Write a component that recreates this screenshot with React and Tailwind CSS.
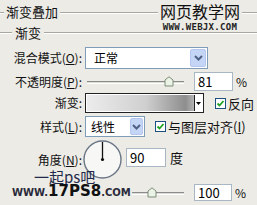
import React from 'react';

const Groove = ({ className = '' }) => (
  <div className={`h-0 border-t border-[#a7a6a0] border-b border-b-white ${className}`} />
);

const Chevron = () => (
  <svg width="9" height="6" viewBox="0 0 9 6">
    <path d="M1 1L4.5 4.5L8 1" stroke="#4d6185" strokeWidth="2" fill="none" />
  </svg>
);

const Check = () => (
  <div className="w-[11px] h-[11px] border border-[#1c5180] bg-white flex items-center justify-center">
    <svg width="9" height="9" viewBox="0 0 9 9">
      <path d="M1.5 4.5L3.5 6.5L7.5 2" stroke="#21a121" strokeWidth="1.8" fill="none" />
    </svg>
  </div>
);

const Slider = ({ thumb }) => (
  <div className="relative w-[97px] h-[16px]">
    <div className="absolute left-0 right-0 top-[7px] h-[3px] border-t border-[#8c8c8c] border-b border-b-white bg-[#dcdcd6]" />
    <svg className="absolute top-[2px]" style={{ left: thumb }} width="10" height="11" viewBox="0 0 10 11">
      <path d="M1 4L5 0.8L9 4V10H1Z" fill="#eaf3e6" stroke="#7c8c78" />
    </svg>
  </div>
);

const Field = ({ value, w, h }) => (
  <div className={`${w} ${h} bg-white border border-[#a9b6c4] flex items-center pl-[3px] text-[13px] text-black`}>
    {value}
  </div>
);

const Label = ({ children }) => (
  <div className="w-[83px] flex justify-end text-[12px] text-[#111] pr-[1px]">{children}</div>
);

export default function App() {
  return (
    <div className="relative w-[257px] h-[205px] overflow-hidden bg-[#ecebe6] font-['Noto_Sans_CJK_SC',sans-serif] leading-none">
      {/* 标题 */}
      <div className="flex items-center h-[20px] pt-[2px]">
        <Groove className="w-[4px] mt-[4px]" />
        <span className="px-[2px] text-[13px] text-[#111]">渐变叠加</span>
        <Groove className="flex-1 mt-[4px]" />
      </div>
      <div className="flex items-center h-[22px] mt-[1px]">
        <Groove className="w-[12px] mt-[2px]" />
        <span className="px-[3px] text-[13px] text-[#111]">渐变</span>
        <Groove className="flex-1 mt-[2px]" />
      </div>

      {/* 混合模式 */}
      <div className="flex items-center gap-[2px] mt-[4px] h-[22px]">
        <Label>混合模式(<u>O</u>):</Label>
        <div className="w-[123px] h-[22px] bg-white border border-[#7f9db9] flex items-center justify-between pl-[8px] pr-[1px] text-[12px] text-black">
          正常
          <div className="w-[16px] h-[18px] rounded-[2px] bg-[#c5d5f6] border border-[#b4c7ee] flex items-center justify-center">
            <Chevron />
          </div>
        </div>
      </div>

      {/* 不透明度 */}
      <div className="flex items-center mt-[3px] h-[19px]">
        <Label>不透明度(<u>P</u>):</Label>
        <div className="ml-[4px]">
          <Slider thumb={77} />
        </div>
        <div className="ml-[10px]">
          <Field value="81" w="w-[39px]" h="h-[19px]" />
        </div>
        <span className="ml-[3px] text-[12px] text-[#111]">%</span>
      </div>

      {/* 渐变 */}
      <div className="flex items-center mt-[2px] h-[20px]">
        <Label>渐变:</Label>
        <div className="ml-[2px] w-[119px] h-[20px] border border-[#222] bg-white p-[1px] flex">
          <div className="flex-1 bg-[linear-gradient(90deg,#ececec,#cfcfcf_55%,#8e8e8e_92%,#b4b4b4)]" />
          <div className="w-[8px] flex items-center justify-center bg-white border-l border-[#222]">
            <svg width="5" height="3" viewBox="0 0 5 3">
              <path d="M0 0H5L2.5 3Z" fill="#000" />
            </svg>
          </div>
        </div>
        <div className="ml-[11px]">
          <Check />
        </div>
        <span className="ml-[2px] text-[13px] text-[#111]">反向</span>
      </div>

      {/* 样式 */}
      <div className="flex items-center mt-[3px] h-[21px]">
        <Label>样式(<u>L</u>):</Label>
        <div className="ml-[2px] w-[60px] h-[21px] bg-white border border-[#7f9db9] flex items-center justify-between pl-[5px] pr-[1px] text-[12px] text-black">
          线性
          <div className="w-[13px] h-[17px] rounded-[2px] bg-[#c5d5f6] border border-[#b4c7ee] flex items-center justify-center">
            <Chevron />
          </div>
        </div>
        <div className="ml-[10px]">
          <Check />
        </div>
        <span className="ml-[2px] text-[13px] text-[#111]">与图层对齐(<u>I</u>)</span>
      </div>

      {/* 角度 */}
      <div className="flex items-center mt-[3px] h-[39px]">
        <Label>角度(<u>N</u>):</Label>
        <svg width="39" height="39" viewBox="0 0 39 39">
          <circle cx="19.5" cy="19.5" r="18.5" fill="#f7f7f5" stroke="#6b7686" strokeWidth="1.4" />
          <line x1="19.5" y1="19.5" x2="19.5" y2="2" stroke="#111" strokeWidth="1.3" />
          <circle cx="19.5" cy="19.5" r="1.6" fill="#111" />
        </svg>
        <div className="ml-[4px] -mt-[4px]">
          <Field value="90" w="w-[40px]" h="h-[19px]" />
        </div>
        <span className="ml-[4px] -mt-[4px] text-[13px] text-[#111]">度</span>
      </div>

      {/* 缩放 (标签被水印覆盖) */}
      <div className="flex items-center mt-[5px] h-[17px]">
        <div className="w-[83px]" />
        <div className="ml-[4px]">
          <Slider thumb={60} />
        </div>
        <div className="ml-[10px]">
          <Field value="100" w="w-[38px]" h="h-[17px]" />
        </div>
        <span className="ml-[3px] text-[12px] text-[#111]">%</span>
      </div>

      {/* 水印 */}
      <div className="absolute left-[158px] top-[1px] flex flex-col items-center">
        <span className="px-[2px] bg-[#ecebe6] text-[16px] leading-[20px] text-[#111]">网页教学网</span>
        <span className="mt-[1px] px-[2px] bg-[#ecebe6] font-['DejaVu_Sans_Mono',monospace] font-bold text-[9px] leading-[10px] text-[#222] tracking-[0.3px]">WWW.WEBJX.COM</span>
      </div>
      <div className="absolute left-[34px] top-[169px] text-[15px] leading-[15px] text-[#1f2a4a]">一起ps吧</div>
      <div className="absolute left-[12px] top-[185px] flex items-end bg-[#ecebe6] pr-[1px]">
        <span className="font-['DejaVu_Sans',sans-serif] font-bold text-[10px] leading-[11px] text-[#2a2a3a]">WWW.</span>
        <span className="font-['DejaVu_Sans',sans-serif] font-bold text-[15px] leading-[13px] text-[#111]">17PS8</span>
        <span className="font-['DejaVu_Sans',sans-serif] font-bold text-[10px] leading-[11px] text-[#2a2a3a]">.COM</span>
      </div>
    </div>
  );
}
